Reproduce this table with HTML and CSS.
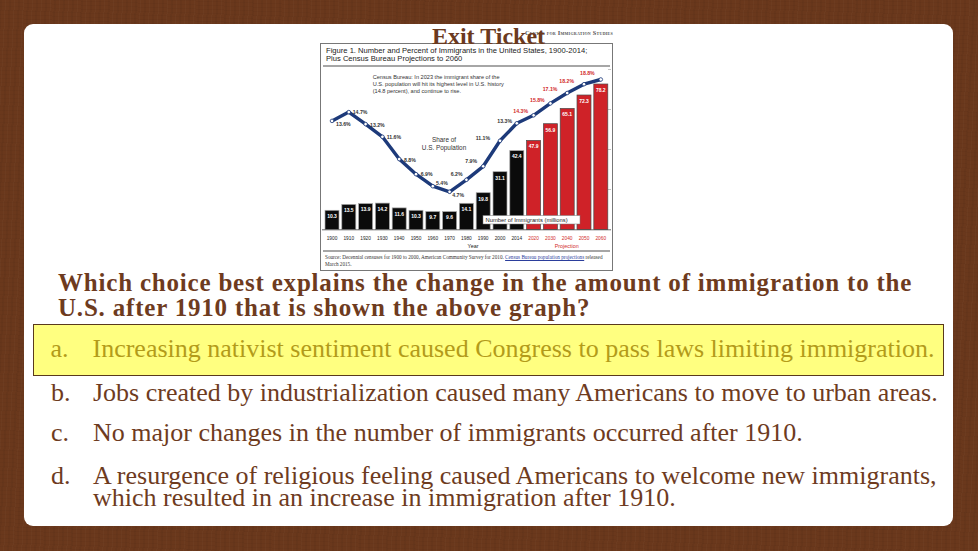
FILE: index.html
```html
<!DOCTYPE html>
<html lang="en">
<head>
<meta charset="utf-8">
<title>Exit Ticket</title>
<link rel="stylesheet" href="styles.css">
</head>
<body>
<main class="card">
  <h1 class="title">Exit Ticket</h1>
  <figure class="figure">
    <div class="org">Center for Immigration Studies</div>
    <div class="frame">
      <p class="caption">Figure 1. Number and Percent of Immigrants in the United States, 1900-2014;<br>Plus Census Bureau Projections to 2060</p>
      <div class="rule"></div>
      <svg class="chart" viewBox="321 67.5 291 183" width="291" height="183" xmlns="http://www.w3.org/2000/svg">
        <g class="ticks">
          <line class="tick" x1="608" y1="70" x2="611" y2="70"/>
          <line class="tick" x1="608" y1="110" x2="611" y2="110"/>
          <line class="tick" x1="608" y1="150" x2="611" y2="150"/>
          <line class="tick" x1="608" y1="190" x2="611" y2="190"/>
        </g>
        <g>
          <rect class="bar-h" x="325" y="210.8" width="14" height="19.2"/>
          <rect class="bar-h" x="341.8" y="204.9" width="14" height="25.1"/>
          <rect class="bar-h" x="358.6" y="204.1" width="14" height="25.9"/>
          <rect class="bar-h" x="375.4" y="203.6" width="14" height="26.4"/>
          <rect class="bar-h" x="392.2" y="208.4" width="14" height="21.6"/>
          <rect class="bar-h" x="409" y="210.8" width="14" height="19.2"/>
          <rect class="bar-h" x="425.8" y="212" width="14" height="18"/>
          <rect class="bar-h" x="442.6" y="212.1" width="14" height="17.9"/>
          <rect class="bar-h" x="459.4" y="203.8" width="14" height="26.2"/>
          <rect class="bar-h" x="476.2" y="193.2" width="14" height="36.8"/>
          <rect class="bar-h" x="493" y="172.2" width="14" height="57.8"/>
          <rect class="bar-h" x="509.8" y="151.1" width="14" height="78.9"/>
          <rect class="bar-p" x="526.6" y="140.9" width="14" height="89.1"/>
          <rect class="bar-p" x="543.4" y="124.2" width="14" height="105.8"/>
          <rect class="bar-p" x="560.2" y="108.9" width="14" height="121.1"/>
          <rect class="bar-p" x="577" y="95.5" width="14" height="134.5"/>
          <rect class="bar-p" x="593.8" y="84.5" width="14" height="145.5"/>
        </g>
        <g class="bar-val">
          <text x="332" y="218.6">10.3</text>
          <text x="348.8" y="212.7">13.5</text>
          <text x="365.6" y="211.9">13.9</text>
          <text x="382.4" y="211.4">14.2</text>
          <text x="399.2" y="216.2">11.6</text>
          <text x="416" y="218.6">10.3</text>
          <text x="432.8" y="219.8">9.7</text>
          <text x="449.6" y="219.9">9.6</text>
          <text x="466.4" y="211.6">14.1</text>
          <text x="483.2" y="201">19.8</text>
          <text x="500" y="180">31.1</text>
          <text x="516.8" y="158.9">42.4</text>
          <text x="533.6" y="148.7">47.9</text>
          <text x="550.4" y="132">56.9</text>
          <text x="567.2" y="116.7">65.1</text>
          <text x="584" y="103.3">72.3</text>
          <text x="600.8" y="92.3">78.2</text>
        </g>
        <line class="axis" x1="322" y1="230.3" x2="611" y2="230.3"/>
        <rect class="legend-box" x="483" y="216" width="97" height="8.5"/>
        <text class="legend" x="485.5" y="222.4">Number of Immigrants (millions)</text>
        <polyline class="trend" points="332,121.4 348.8,112.6 365.6,124.6 382.4,137.3 399.2,159.6 416,174.7 432.8,186.7 449.6,192.3 466.4,180.3 483.2,166.8 500,141.3 516.8,123.8 533.6,115.8 550.4,103.9 567.2,93.5 584,84.7 600.8,80"/>
        <g class="pt">
          <circle cx="332" cy="121.4" r="1.8"/>
          <circle cx="348.8" cy="112.6" r="1.8"/>
          <circle cx="365.6" cy="124.6" r="1.8"/>
          <circle cx="382.4" cy="137.3" r="1.8"/>
          <circle cx="399.2" cy="159.6" r="1.8"/>
          <circle cx="416" cy="174.7" r="1.8"/>
          <circle cx="432.8" cy="186.7" r="1.8"/>
          <circle cx="449.6" cy="192.3" r="1.8"/>
          <circle cx="466.4" cy="180.3" r="1.8"/>
          <circle cx="483.2" cy="166.8" r="1.8"/>
          <circle cx="500" cy="141.3" r="1.8"/>
          <circle cx="516.8" cy="123.8" r="1.8"/>
          <circle cx="533.6" cy="115.8" r="1.8"/>
          <circle cx="550.4" cy="103.9" r="1.8"/>
          <circle cx="567.2" cy="93.5" r="1.8"/>
          <circle cx="584" cy="84.7" r="1.8"/>
          <circle cx="600.8" cy="80" r="1.8"/>
        </g>
        <g class="pct">
          <text x="336" y="126.2">13.6%</text>
          <text x="352.7" y="114.9">14.7%</text>
          <text x="370" y="127.6">13.2%</text>
          <text x="386.7" y="139.9">11.6%</text>
          <text x="404" y="162.6">8.8%</text>
          <text x="420.7" y="176.9">6.9%</text>
          <text x="436" y="185.2">5.4%</text>
          <text x="452.3" y="197.9">4.7%</text>
          <text x="450.7" y="176.2">6.2%</text>
          <text x="465.3" y="163.6">7.9%</text>
          <text x="475.7" y="140.9">11.1%</text>
          <text x="497.3" y="123.6">13.3%</text>
        </g>
        <g class="pct proj">
          <text x="513.3" y="113.9">14.3%</text>
          <text x="530" y="102.6">15.8%</text>
          <text x="542.7" y="91.9">17.1%</text>
          <text x="559.3" y="83.6">18.2%</text>
          <text x="580" y="75.2">18.8%</text>
        </g>
        <g class="note">
          <text x="372.7" y="79.3">Census Bureau: In 2023 the immigrant share of the</text>
          <text x="372.7" y="86.3">U.S. population will hit its highest level in U.S. history</text>
          <text x="372.7" y="93.3">(14.8 percent), and continue to rise.</text>
        </g>
        <g class="share">
          <text x="444" y="142.2">Share of</text>
          <text x="444" y="150.2">U.S. Population</text>
        </g>
        <g class="yr">
          <text x="332" y="240.7">1900</text>
          <text x="348.8" y="240.7">1910</text>
          <text x="365.6" y="240.7">1920</text>
          <text x="382.4" y="240.7">1930</text>
          <text x="399.2" y="240.7">1940</text>
          <text x="416" y="240.7">1950</text>
          <text x="432.8" y="240.7">1960</text>
          <text x="449.6" y="240.7">1970</text>
          <text x="466.4" y="240.7">1980</text>
          <text x="483.2" y="240.7">1990</text>
          <text x="500" y="240.7">2000</text>
          <text x="516.8" y="240.7">2014</text>
        </g>
        <g class="yr proj">
          <text x="533.6" y="240.7">2020</text>
          <text x="550.4" y="240.7">2030</text>
          <text x="567.2" y="240.7">2040</text>
          <text x="584" y="240.7">2050</text>
          <text x="600.8" y="240.7">2060</text>
        </g>
        <text class="axis-title" x="473" y="248.3">Year</text>
        <text class="axis-title proj" x="566.7" y="248.8">Projection</text>
      </svg>
      <div class="rule rule-low"></div>
      <p class="source">Source: Decennial censuses for 1900 to 2000, American Community Survey for 2010. <span class="link">Census Bureau population projections</span> released March 2015.</p>
    </div>
  </figure>
  <p class="question">Which choice best explains the change in the amount of immigration to the<br>U.S. after 1910 that is shown the above graph?</p>
  <ol class="options">
    <li class="opt opt-a"><span class="letter">a.</span><span class="text">Increasing nativist sentiment caused Congress to pass laws limiting immigration.</span></li>
    <li class="opt opt-b"><span class="letter">b.</span><span class="text">Jobs created by industrialization caused many Americans to move to urban areas.</span></li>
    <li class="opt opt-c"><span class="letter">c.</span><span class="text">No major changes in the number of immigrants occurred after 1910.</span></li>
    <li class="opt opt-d"><span class="letter">d.</span><span class="text">A resurgence of religious feeling caused Americans to welcome new immigrants,<br>which resulted in an increase in immigration after 1910.</span></li>
  </ol>
</main>
</body>
</html>
```

FILE: styles.css
```css
html, body {
  margin: 0;
  padding: 0;
}

body {
  width: 978px;
  height: 551px;
  overflow: hidden;
  background:
    repeating-linear-gradient(93deg, rgba(0,0,0,0.035) 0 2px, transparent 2px 5px, rgba(255,255,255,0.02) 5px 6px, transparent 6px 9px),
    repeating-linear-gradient(2deg, rgba(0,0,0,0.03) 0 1px, transparent 1px 4px),
    #6a381c;
  font-family: "Liberation Serif", "Times New Roman", serif;
}

.card {
  display: block;
  box-sizing: border-box;
  margin: 24px 25px 0 24px;
  height: 502px;
  background: #ffffff;
  border-radius: 9px;
  overflow: hidden;
}

.title {
  position: relative;
  z-index: 1;
  margin: 0;
  font: bold 24px/24px "Liberation Serif", serif;
  color: #6b3a1e;
  text-align: center;
}

.figure {
  margin: -20px 0 0 296px;
  width: 293px;
}

.org {
  font: bold 6.4px/10px "Liberation Serif", serif;
  font-variant: small-caps;
  letter-spacing: 0.25px;
  color: #555;
  text-align: right;
  margin-bottom: 5px;
}

.frame {
  border: 1px solid #777;
  background: #fff;
}

.caption {
  margin: 0;
  padding: 3px 5px 0;
  font: 7.6px/7.5px "Liberation Sans", Arial, sans-serif;
  color: #222;
}

.rule {
  height: 2px;
  background: #a6a6a6;
  margin: 3px 2px 0;
}

.rule-low {
  margin: 0 2px;
}

.chart {
  display: block;
  width: 291px;
  height: 183px;
}

.source {
  margin: 0;
  padding: 2px 4px 3px;
  font: 5.2px/6.5px "Liberation Serif", serif;
  color: #333;
}

.link {
  color: #2b3e9c;
  text-decoration: underline;
}

/* chart pieces */
.bar-h { fill: #0b0b0b; stroke: #a8a8a8; stroke-width: 0.7; }
.bar-p { fill: #cf2228; stroke: #4a4a4a; stroke-width: 0.7; }
.bar-val { font: bold 5px "Liberation Sans", sans-serif; fill: #fff; text-anchor: middle; }
.yr { font: 4.8px "Liberation Sans", sans-serif; fill: #222; text-anchor: middle; }
.yr.proj { fill: #d12a2a; }
.axis-title { font: 5.4px "Liberation Sans", sans-serif; fill: #222; text-anchor: middle; }
.axis-title.proj { fill: #d12a2a; }
.pct { font: bold 5.2px "Liberation Sans", sans-serif; fill: #333; }
.pct.proj { fill: #d12a2a; }
.trend { fill: none; stroke: #1d3a7a; stroke-width: 3.4; stroke-linejoin: round; }
.pt { fill: #fff; stroke: #1d3a7a; stroke-width: 0.8; }
.note { font: 5.6px "Liberation Sans", sans-serif; fill: #333; }
.share { font: 6.4px "Liberation Sans", sans-serif; fill: #333; text-anchor: middle; }
.legend-box { fill: #fff; stroke: #777; stroke-width: 0.5; }
.legend { font: 5.8px "Liberation Sans", sans-serif; fill: #222; }
.axis { stroke: #444; stroke-width: 0.8; }
.tick { stroke: #999; stroke-width: 0.6; }

/* question */
.question {
  margin: 0 5px 0 34px;
  font: bold 25px/24.5px "Liberation Serif", serif;
  letter-spacing: 0.8px;
  color: #6e3b1e;
  white-space: nowrap;
}

.options {
  list-style: none;
  margin: 0;
  padding: 0;
}

.opt {
  display: flex;
  margin: 0 0 0 27px;
  font: 26px/22px "Liberation Serif", serif;
  color: #6e3b1e;
  white-space: nowrap;
}

.letter {
  flex: none;
  width: 42px;
}

.opt-a {
  margin: 3.5px 9px 0 9px;
  padding: 13.7px 0 15.3px 16.5px;
  background: #ffff80;
  border: 1.5px solid #5a3a1c;
  color: #b39b1a;
}

.opt-b { margin-top: 5.2px; }
.opt-c { margin-top: 18.3px; }
.opt-d { margin-top: 21px; }
```
